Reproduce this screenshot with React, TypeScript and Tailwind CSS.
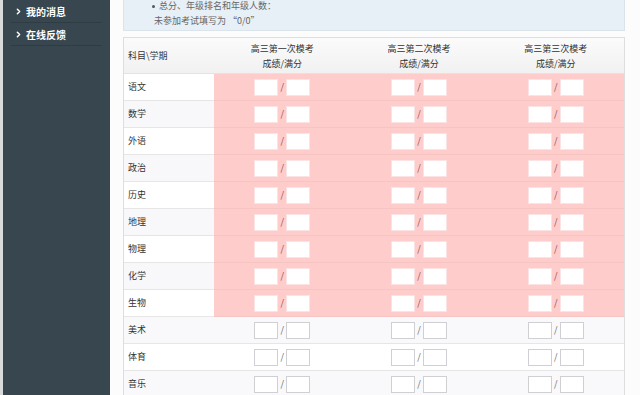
import React from "react";
import { ChevronRight } from "lucide-react";

const subjects = ["语文", "数学", "外语", "政治", "历史", "地理", "物理", "化学", "生物", "美术", "体育", "音乐"];
const exams = ["高三第一次模考", "高三第二次模考", "高三第三次模考"];

const ScoreInput = ({ pink }: { pink: boolean }) => (
  <div className="flex items-center justify-center gap-[2px]">
    <div className={pink ? "w-[24px] h-[17px] bg-white border border-[#fbe3e3]" : "w-[24px] h-[17px] bg-white border border-[#cfcfd4]"} />
    <span className={pink ? "text-[9px] text-[#8a4a4a] w-[4px] text-center" : "text-[9px] text-[#666] w-[4px] text-center"}>/</span>
    <div className={pink ? "w-[24px] h-[17px] bg-white border border-[#fbe3e3]" : "w-[24px] h-[17px] bg-white border border-[#cfcfd4]"} />
  </div>
);

const App = () => {
  return (
    <div
      className="flex w-[640px] h-[395px] overflow-hidden bg-[#fcfcfc] text-[#333]"
      style={{ fontFamily: '"Noto Sans CJK SC", "Noto Sans", sans-serif' }}
    >
      <div className="w-[3px] bg-[#d9dadb] shrink-0" />
      {/* sidebar */}
      <div className="w-[107px] shrink-0 bg-[#37464f] pt-[1px]">
        <div className="mx-[8px] h-[22px] flex items-center border-b border-[#2f3c44] text-white text-[10px] font-bold">
          <ChevronRight className="w-[9px] h-[9px] ml-[3px] mr-[3px]" strokeWidth={4} />
          <span>我的消息</span>
        </div>
        <div className="mx-[8px] h-[23px] flex items-center border-b border-[#2f3c44] text-white text-[10px] font-bold">
          <ChevronRight className="w-[9px] h-[9px] ml-[3px] mr-[3px]" strokeWidth={4} />
          <span>在线反馈</span>
        </div>
      </div>
      {/* main */}
      <div className="flex-1 pl-[13px] pr-[15px]">
        <div className="h-[32px] bg-[#e7f0f6] border-x border-b border-[#dae4ea] text-[#666] text-[9px] leading-[14px] pl-[30px] -mt-[1px]">
          <div className="-mt-[1px] flex items-center gap-[4px] -ml-[2px]">
            <span className="w-[3px] h-[3px] rounded-full bg-[#555]" />
            <span>总分、年级排名和年级人数：</span>
          </div>
          <div className="mt-[1px]">未参加考试填写为 “0/0”</div>
        </div>
        <div className="mt-[6px] border border-[#dedede] bg-white">
          <div className="grid grid-cols-[90px_1fr_1fr_1fr] h-[36px] bg-gradient-to-b from-[#fbfbfb] to-[#f1f1f1] border-b border-[#e3e3e3] text-[9px]">
            <div className="flex items-center pl-[4px]">科目\学期</div>
            {exams.map((e) => (
              <div key={e} className="flex flex-col items-center justify-center leading-[15px]">
                <span>{e}</span>
                <span>成绩/满分</span>
              </div>
            ))}
          </div>
          {subjects.map((s, i) => {
            const pink = i < 9;
            const stripe = i % 2 === 1;
            return (
              <div
                key={s}
                className={
                  pink
                    ? "grid grid-cols-[90px_1fr_1fr_1fr] h-[27px]"
                    : stripe
                    ? "grid grid-cols-[90px_1fr_1fr_1fr] h-[27px] bg-[#f9f9fb] border-b border-[#e6e6e6]"
                    : "grid grid-cols-[90px_1fr_1fr_1fr] h-[27px] bg-white border-b border-[#e6e6e6]"
                }
              >
                <div
                  className={
                    pink
                      ? stripe
                        ? "flex items-center pl-[4px] text-[9px] bg-[#f8f8fa] border-b border-[#e6e6e6]"
                        : "flex items-center pl-[4px] text-[9px] bg-white border-b border-[#e6e6e6]"
                      : "flex items-center pl-[4px] text-[9px]"
                  }
                >
                  {s}
                </div>
                {exams.map((e) => (
                  <div
                    key={e}
                    className={pink ? "flex items-center justify-center bg-[#ffcccc] border-b border-[#f7c4c4]" : "flex items-center justify-center"}
                  >
                    <ScoreInput pink={pink} />
                  </div>
                ))}
              </div>
            );
          })}
        </div>
      </div>
    </div>
  );
};

export default App;
